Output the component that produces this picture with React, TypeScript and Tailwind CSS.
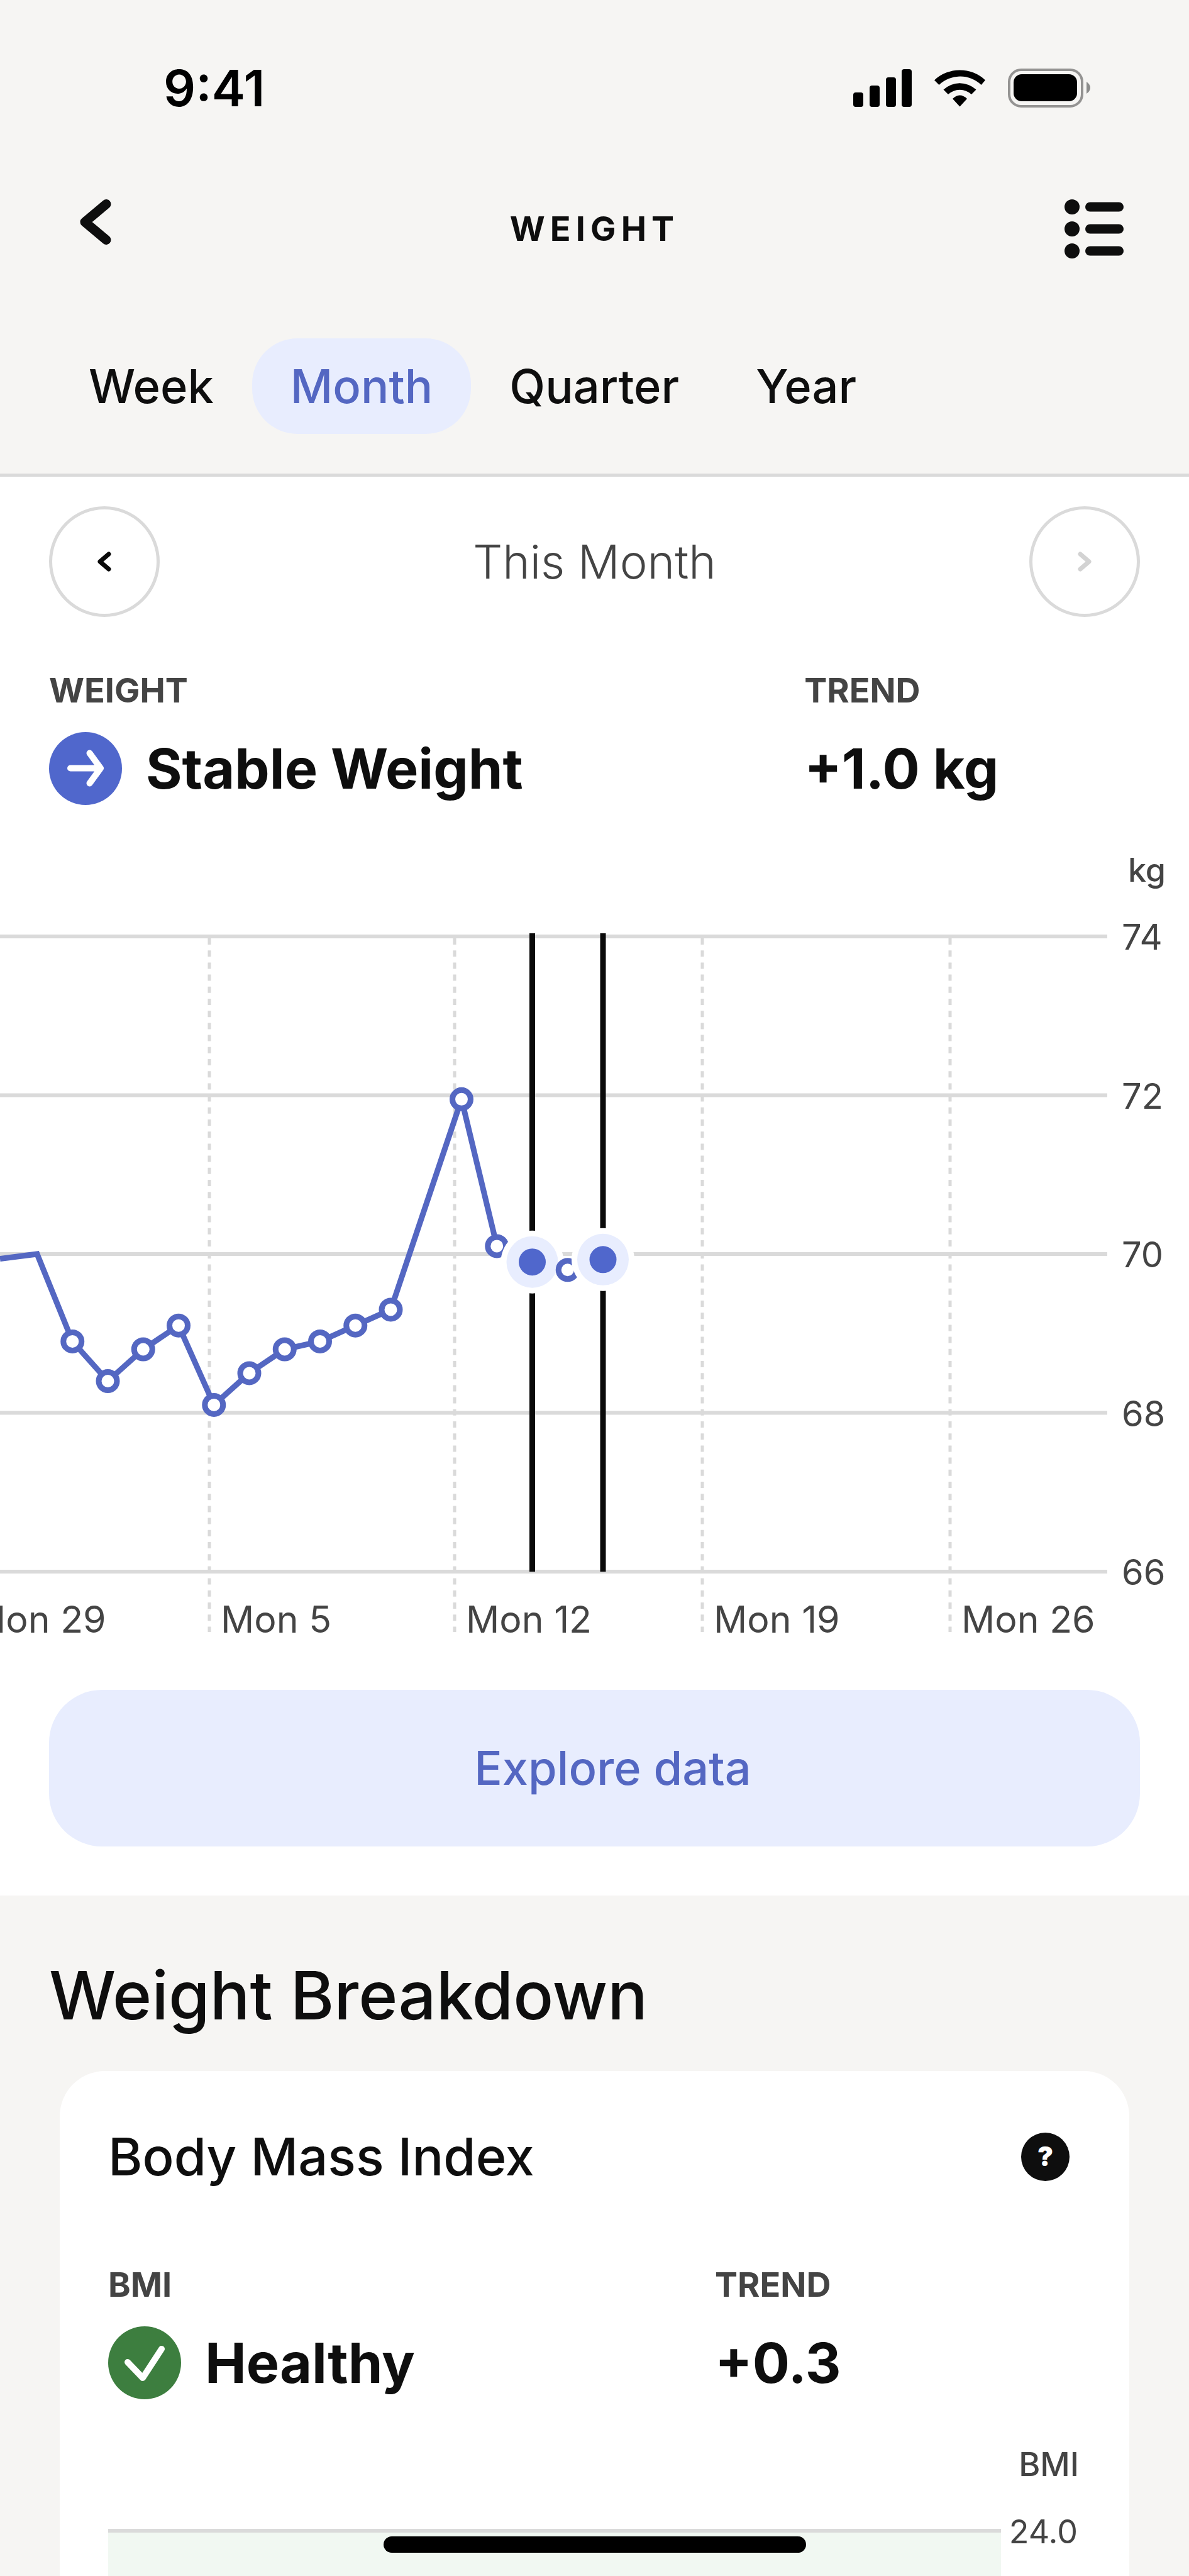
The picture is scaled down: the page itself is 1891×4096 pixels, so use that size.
const RANGES = ["Week", "Month", "Quarter", "Year"];

// day offset from the first visible reading, weight in kg
const READINGS = [
  { day: 1, kg: 68.9 },
  { day: 2, kg: 68.4 },
  { day: 3, kg: 68.8 },
  { day: 4, kg: 69.1 },
  { day: 5, kg: 68.1 },
  { day: 6, kg: 68.5 },
  { day: 7, kg: 68.8 },
  { day: 8, kg: 68.9 },
  { day: 9, kg: 69.1 },
  { day: 10, kg: 69.3 },
  { day: 12, kg: 71.95 },
  { day: 13, kg: 70.1 },
  { day: 14, kg: 69.9, selected: true },
  { day: 15, kg: 69.8 },
  { day: 16, kg: 69.93, selected: true },
];

const WEEKS = [
  { label: "Mon 29", x: -62 },
  { label: "Mon 5", x: 333 },
  { label: "Mon 12", x: 723 },
  { label: "Mon 19", x: 1117 },
  { label: "Mon 26", x: 1511 },
];

const TOP = 209;
const BOTTOM = 1219;

const xOf = (day: number) => 59 + day * 56.25;
const yOf = (kg: number) => TOP + ((74 - kg) / 8) * (BOTTOM - TOP);

function StatusBar() {
  return (
    <div className="flex items-center justify-between pt-[100px] pr-[155px] pl-[260px]">
      <span className="text-[80px] leading-[80px] font-semibold text-black">9:41</span>
      <svg width="379" height="64" viewBox="0 0 379 64" aria-hidden="true">
        <rect x="0" y="39" width="16" height="23" rx="4" />
        <rect x="26" y="28" width="16" height="34" rx="4" />
        <rect x="52" y="15" width="16" height="47" rx="4" />
        <rect x="77" y="2" width="16" height="60" rx="4" />
        <path d="M129 19.500A59 59 0 0 1 210 19.500L203.500 27A48.500 48.500 0 0 0 136.500 27Z" />
        <path d="M143.500 34.500A38 38 0 0 1 195.500 34.500L188 42A27.500 27.500 0 0 0 151 42Z" />
        <path d="M158 49Q169.500 38 181 49L169.500 61.500Z" />
        <rect x="248" y="3" width="116" height="58" rx="19" fill="none" stroke="#949392" strokeWidth="4" />
        <rect x="255" y="10" width="101" height="43" rx="13" />
        <path d="M371 22Q377 26 377 31.500T371 41Z" fill="#8c8c8b" />
      </svg>
    </div>
  );
}

function Stat({ label, value, icon }: { label: string; value: string; icon?: React.ReactNode }) {
  return (
    <div>
      <div className="text-[54px] leading-[60px] font-bold text-[#444444]">{label}</div>
      <div className="mt-[36px] flex h-[116px] items-center gap-[38px]">
        {icon}
        <span className="text-[88px] leading-[116px] font-bold whitespace-nowrap">{value}</span>
      </div>
    </div>
  );
}

function ArrowBadge() {
  return (
    <svg width="116" height="116" viewBox="0 0 116 116" fill="none" aria-hidden="true">
      <circle cx="58" cy="58" r="58" fill="#5067cc" />
      <path
        d="M34 57.500H82M64.500 33.500L82 57.500L64.500 81.500"
        stroke="#fff"
        strokeWidth="10"
        strokeLinecap="round"
        strokeLinejoin="round"
      />
    </svg>
  );
}

function CheckBadge() {
  return (
    <svg width="116" height="116" viewBox="0 0 116 116" fill="none" aria-hidden="true">
      <circle cx="58" cy="58" r="58" fill="#3d7e3f" />
      <path
        d="M31 57L55 82L85 36"
        stroke="#fff"
        strokeWidth="10"
        strokeLinecap="round"
        strokeLinejoin="round"
      />
    </svg>
  );
}

function WeightChart() {
  const line = READINGS.slice(0, 13)
    .map((r) => `L${xOf(r.day)} ${yOf(r.kg)}`)
    .join("");

  return (
    <svg viewBox="0 0 1891 1330" className="block w-full" role="img" aria-label="Weight this month">
      {[74, 72, 70, 68, 66].map((kg) => (
        <g key={kg}>
          <line x1="0" x2="1761" y1={yOf(kg)} y2={yOf(kg)} stroke="#dadada" strokeWidth="6" />
          <text x="1784" y={yOf(kg) + 21} className="fill-[#444444] text-[56px]">
            {kg}
          </text>
        </g>
      ))}
      <text x="1854" y="122" textAnchor="end" className="fill-[#444444] text-[52px] font-medium">
        kg
      </text>

      {WEEKS.map((w) => (
        <g key={w.label}>
          <line
            x1={w.x}
            x2={w.x}
            y1={TOP + 3}
            y2="1315"
            stroke="#dadada"
            strokeWidth="5"
            strokeDasharray="10 9.200"
          />
          <text x={w.x + 18} y="1316" className="fill-[#444444] text-[59px]">
            {w.label}
          </text>
        </g>
      ))}

      {READINGS.filter((r) => r.selected).map((r) => (
        <line
          key={r.day}
          x1={xOf(r.day)}
          x2={xOf(r.day)}
          y1={TOP - 5}
          y2={BOTTOM}
          stroke="#0a0a0a"
          strokeWidth="9"
        />
      ))}

      <path d={`M0 ${yOf(69.94)}L${xOf(0)} ${yOf(70)}${line}`} fill="none" stroke="#5467c2" strokeWidth="9" />

      {READINGS.map((r) =>
        r.selected ? (
          <g key={r.day}>
            <circle cx={xOf(r.day)} cy={yOf(r.kg)} r="50" fill="#fff" />
            <circle cx={xOf(r.day)} cy={yOf(r.kg)} r="41" fill="#e8edfe" />
            <circle cx={xOf(r.day)} cy={yOf(r.kg)} r="21.500" fill="#5067cc" />
          </g>
        ) : (
          <circle
            key={r.day}
            cx={xOf(r.day)}
            cy={yOf(r.kg)}
            r="14.500"
            fill="#fff"
            stroke="#5467c2"
            strokeWidth="9"
          />
        )
      )}
    </svg>
  );
}

function BmiChart() {
  return (
    <svg viewBox="0 0 1544 281" className="block w-full" role="img" aria-label="BMI this month">
      <rect x="0" y="209" width="1420" height="72" fill="#f1f8f2" />
      <line x1="0" x2="1420" y1="209" y2="209" stroke="#dadada" strokeWidth="6" />
      <text x="1544" y="122" textAnchor="end" className="fill-[#444444] text-[52px] font-medium">
        BMI
      </text>
      <text x="1542" y="229" textAnchor="end" className="fill-[#444444] text-[52px]">
        24.0
      </text>
    </svg>
  );
}

export default function App() {
  return (
    <main className="relative min-h-screen overflow-hidden bg-[#f6f5f3] font-['Inter','Liberation_Sans',sans-serif] text-[#0e0e0e]">
      <StatusBar />

      {/* Title bar */}
      <header className="mt-[124px] grid h-[120px] grid-cols-[1fr_auto_1fr] items-center px-[104px]">
        <button type="button" aria-label="Back" className="flex h-[94px] items-start pl-[23px]">
          <svg width="50" height="72" viewBox="0 0 50 72" fill="none" aria-hidden="true">
            <path
              d="M42 7.500L8 36L42 64.500"
              stroke="#0e0e0e"
              strokeWidth="15"
              strokeLinecap="round"
              strokeLinejoin="round"
            />
          </svg>
        </button>
        <h1 className="text-[54px] leading-[60px] font-bold tracking-[0.15em]">WEIGHT</h1>
        <button type="button" aria-label="All entries" className="justify-self-end">
          <svg width="94" height="94" viewBox="0 0 94 94" fill="#0e0e0e" aria-hidden="true">
            {[12, 47, 82].map((y) => (
              <g key={y}>
                <circle cx="12" cy={y} r="12" />
                <rect x="33" y={y - 7.5} width="61" height="15" rx="7.500" />
              </g>
            ))}
          </svg>
        </button>
      </header>

      {/* Range tabs */}
      <nav className="mt-[114px] flex border-b-[5px] border-[#dadada] pb-[63px] pl-[80px]">
        {RANGES.map((range) => (
          <button
            key={range}
            type="button"
            aria-pressed={range === "Month"}
            className={
              range === "Month"
                ? "h-[152px] rounded-[72px] bg-[#e8edfe] px-[61px] text-[74px] font-medium text-[#5467c2]"
                : "h-[152px] px-[61px] text-[74px] font-medium"
            }
          >
            {range}
          </button>
        ))}
      </nav>

      <section className="bg-white pt-[47px] pb-[78px]">
        {/* Period switcher */}
        <div className="flex items-center justify-between px-[78px]">
          <button
            type="button"
            aria-label="Previous month"
            className="flex size-[176px] items-center justify-center rounded-full border-[5px] border-[#dadada]"
          >
            <svg width="22" height="32" viewBox="0 0 22 32" fill="none" aria-hidden="true">
              <path d="M18 4L4 16L18 28" stroke="#0a0a0a" strokeWidth="7" strokeLinecap="round" strokeLinejoin="round" />
            </svg>
          </button>
          <h2 className="text-[74px] leading-[80px] font-[350] text-[#444444]">This Month</h2>
          <button
            type="button"
            aria-label="Next month"
            disabled
            className="flex size-[176px] items-center justify-center rounded-full border-[5px] border-[#dadada]"
          >
            <svg width="22" height="32" viewBox="0 0 22 32" fill="none" aria-hidden="true">
              <path d="M4 4L18 16L4 28" stroke="#d3d3d3" strokeWidth="7" strokeLinecap="round" strokeLinejoin="round" />
            </svg>
          </button>
        </div>

        <div className="mt-[87px] grid grid-cols-[9fr_4fr] px-[78px]">
          <Stat label="WEIGHT" value="Stable Weight" icon={<ArrowBadge />} />
          <Stat label="TREND" value="+1.0 kg" />
        </div>

        <WeightChart />

        <div className="mt-[77px] px-[78px]">
          <button
            type="button"
            className="h-[249px] w-full rounded-[84px] bg-[#e8edfe] pl-[58px] text-[74px] font-medium text-[#5467c2]"
          >
            Explore data
          </button>
        </div>
      </section>

      {/* Breakdown */}
      <section className="pt-[99px]">
        <h2 className="px-[78px] text-[106px] leading-[120px] font-medium">Weight Breakdown</h2>

        <div className="mx-[95px] mt-[60px] rounded-t-[72px] bg-white pt-[86px] pr-[80px] pl-[77px]">
          <div className="flex h-[100px] items-center justify-between pr-[15px]">
            <h3 className="text-[83px] leading-[100px] font-medium">Body Mass Index</h3>
            <button
              type="button"
              aria-label="About Body Mass Index"
              className="flex size-[77px] items-center justify-center rounded-full bg-[#0e0e0e] text-[42px] leading-[42px] font-black text-white"
            >
              ?
            </button>
          </div>

          <div className="mt-[124px] grid grid-cols-[5fr_3fr]">
            <Stat label="BMI" value="Healthy" icon={<CheckBadge />} />
            <Stat label="TREND" value="+0.3" />
          </div>

          <BmiChart />
        </div>
      </section>

      {/* Home indicator */}
      <div className="absolute bottom-[37px] left-1/2 h-[26px] w-[672px] -translate-x-1/2 rounded-full bg-black" />
    </main>
  );
}
